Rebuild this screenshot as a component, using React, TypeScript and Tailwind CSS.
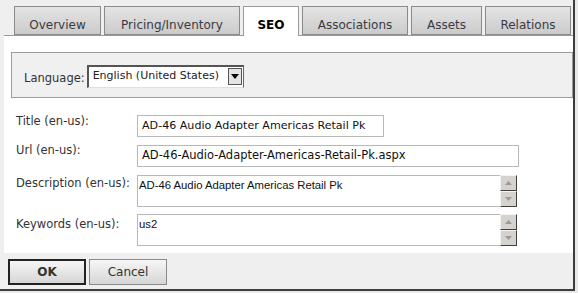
import React from "react";

const font = { fontFamily: '"DejaVu Sans", "Noto Sans", sans-serif' };

function ScrollBtn({ up }: { up: boolean }) {
  return (
    <div className="w-[17px] h-[16px] bg-[#d6d3ce] border border-t-[#f4f4f4] border-l-[#f4f4f4] border-b-[#404040] border-r-[#404040] flex items-center justify-center">
      <svg width="7" height="4" viewBox="0 0 7 4">
        {up ? <path d="M0 4 L3.5 0 L7 4 Z" fill="#9a9a9a" /> : <path d="M0 0 L3.5 4 L7 0 Z" fill="#9a9a9a" />}
      </svg>
    </div>
  );
}

function TextArea({ value }: { value: string }) {
  return (
    <div className="flex w-[380px] h-[32px]">
      <div className="flex-1 border border-[#b8b8b8] border-r-0 bg-white pl-[1px] pt-[3px] text-[11.3px] text-[#111] leading-[13px]" style={{ fontFamily: '"Liberation Sans", Arial, sans-serif' }}>
        {value}
      </div>
      <div className="flex flex-col">
        <ScrollBtn up />
        <ScrollBtn up={false} />
      </div>
    </div>
  );
}

export default function App() {
  const tabs = [
    { label: "Overview", w: "w-[87px]" },
    { label: "Pricing/Inventory", w: "w-[136px]" },
    { label: "SEO", w: "w-[56px]", active: true },
    { label: "Associations", w: "w-[106px]" },
    { label: "Assets", w: "w-[71px]" },
    { label: "Relations", w: "w-[86px]" },
  ];
  return (
    <div className="w-[578px] h-[293px] bg-[#e9e9e9] overflow-hidden" style={font}>
      <div className="w-[575px] h-[291px] bg-[#efefef] border-r-2 border-b-2 border-[#3c3c3c] flex flex-col">
        {/* Tabs */}
        <div className="h-[35px] pt-[6px] pl-[14px] flex gap-[3px] items-end shrink-0">
          {tabs.map((t) =>
            t.active ? (
              <div key={t.label} className={`${t.w} h-[30px] -mb-px z-10 bg-white border border-b-0 border-[#9a9a9a] flex items-center justify-center pt-[7px] text-[12px] font-bold text-black`}>
                {t.label}
              </div>
            ) : (
              <div key={t.label} className={`${t.w} h-[29px] border border-[#8a8a8a] bg-gradient-to-b from-[#e4e4e4] to-[#cbcbcb] flex items-center justify-center text-[12px] text-[#3a3a44] pt-[8px]`}>
                {t.label}
              </div>
            )
          )}
        </div>
        {/* Panel */}
        <div className="ml-[4px] w-[569px] h-[218px] bg-white border-t border-[#9a9a9a] shrink-0 flex flex-col pl-[7px]">
          <div className="mt-[16px] h-[46px] border border-[#9c9c9c] bg-[#f0f0f0] flex items-center pl-[12px] pt-[2px]">
            <span className="text-[11.5px] text-[#333] mt-[5px] mr-[2px]">Language:</span>
            <div className="w-[157px] h-[23px] bg-white border border-t-2 border-l-2 border-t-[#555] border-l-[#555] border-r-[#666] border-b-[#e0e0e0] flex items-center">
              <span className="flex-1 pl-[4px] text-[11px] text-[#222] whitespace-nowrap">English (United States)</span>
              <div className="w-[14px] h-[17px] mr-[1px] bg-[#e4e4e4] border border-[#555] flex items-center justify-center">
                <svg width="8" height="5" viewBox="0 0 8 5"><path d="M0 0 L8 0 L4 5 Z" fill="#000" /></svg>
              </div>
            </div>
          </div>
          <div className="flex flex-col text-[11.5px] text-[#333]">
            <div className="flex mt-[17px]">
              <div className="w-[126px] pl-[5px] -mt-[2px]">Title (en-us):</div>
              <div className="w-[247px] h-[22px] border border-[#b8b8b8] flex items-center pl-[4px] text-[11.1px] text-[#111] whitespace-nowrap overflow-hidden">AD-46 Audio Adapter Americas Retail Pk</div>
            </div>
            <div className="flex mt-[8px]">
              <div className="w-[126px] pl-[5px] -mt-[3px]">Url (en-us):</div>
              <div className="w-[382px] h-[22px] border border-[#b8b8b8] flex items-center pl-[4px] text-[#111] whitespace-nowrap">AD-46-Audio-Adapter-Americas-Retail-Pk.aspx</div>
            </div>
            <div className="flex mt-[8px]">
              <div className="w-[126px] pl-[5px] pt-[0px]">Description (en-us):</div>
              <TextArea value="AD-46 Audio Adapter Americas Retail Pk" />
            </div>
            <div className="flex mt-[7px]">
              <div className="w-[126px] pl-[5px] pt-[2px]">Keywords (en-us):</div>
              <TextArea value="us2" />
            </div>
          </div>
        </div>
        {/* Footer */}
        <div className="flex-1 flex items-start gap-[3px] pl-[8px] pt-[6px]">
          <button className="w-[78px] h-[26px] border-2 border-[#222] bg-gradient-to-b from-[#f6f6f6] to-[#d6d6d6] text-[12px] font-bold text-[#333]">OK</button>
          <button className="w-[78px] h-[26px] border border-[#8a8a8a] bg-gradient-to-b from-[#f6f6f6] to-[#d6d6d6] text-[12px] text-[#333]">Cancel</button>
        </div>
      </div>
    </div>
  );
}
